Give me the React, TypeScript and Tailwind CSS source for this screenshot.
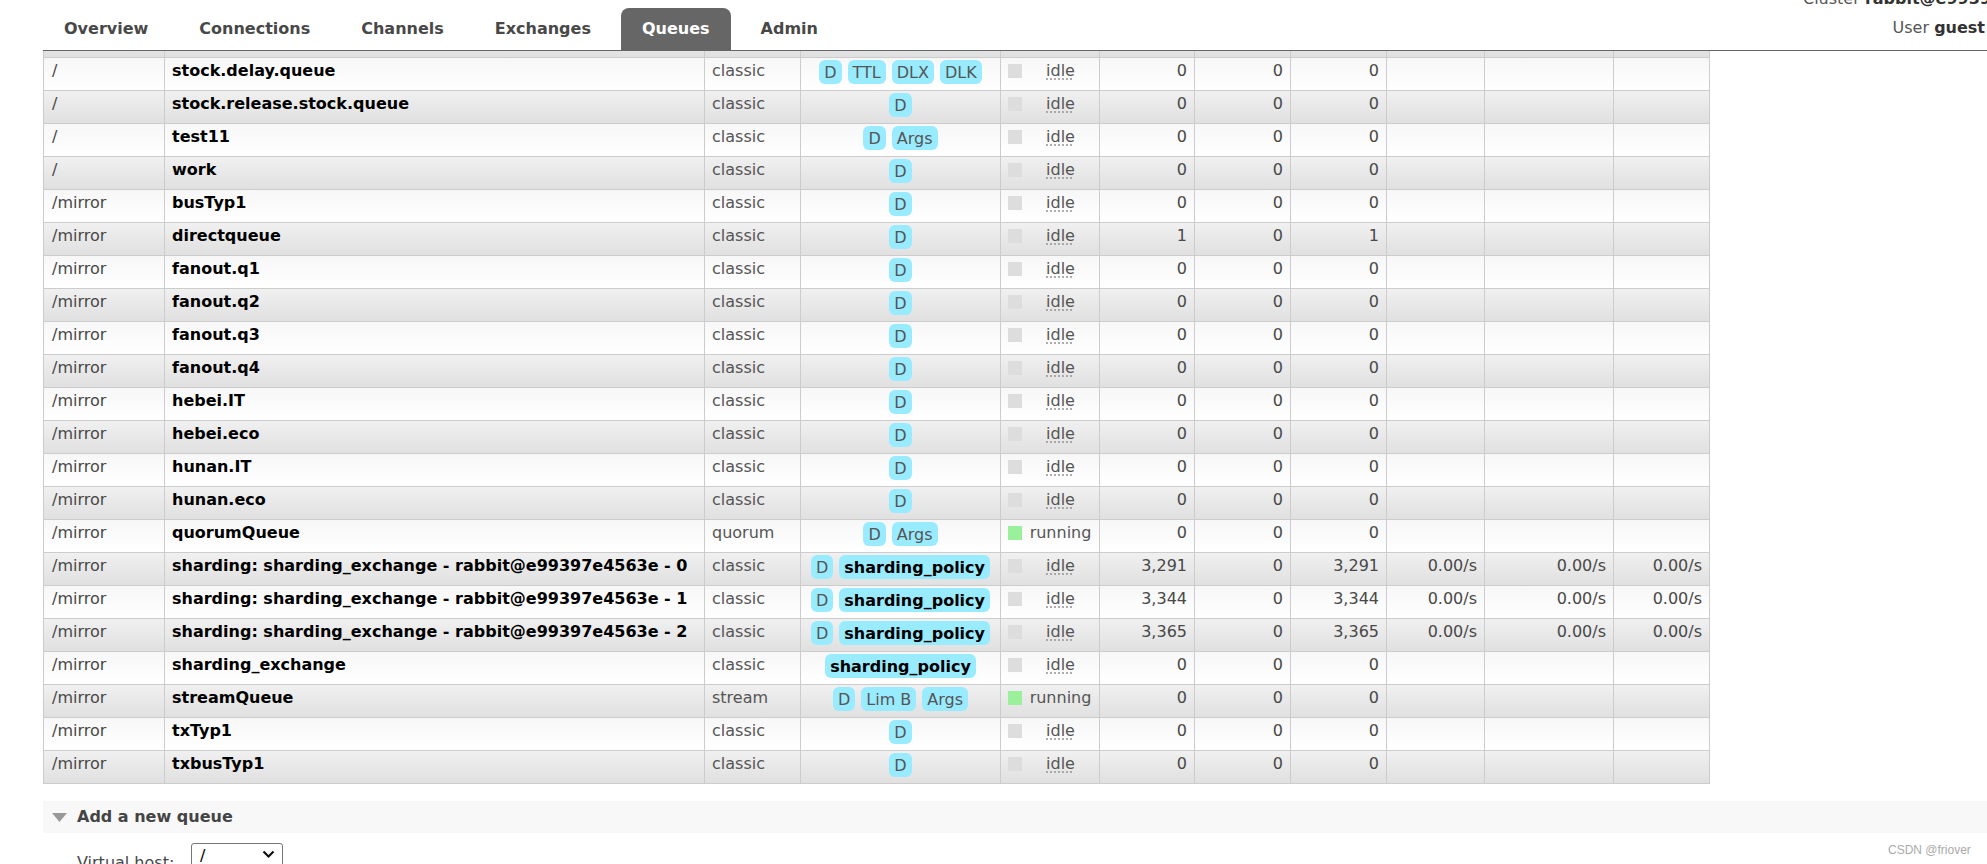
import React from "react";

type Feature = { label: string; strong?: boolean };

type Queue = {
    vhost: string;
    name: string;
    type: string;
    features: Feature[];
    running?: boolean;
    ready: string;
    unacked: string;
    total: string;
    rates?: string[];
};

const D: Feature = { label: "D" };
const ARGS: Feature = { label: "Args" };
const POLICY: Feature = { label: "sharding_policy", strong: true };

const tabs = ["Overview", "Connections", "Channels", "Exchanges", "Queues", "Admin"];

const mirror = (name: string, extra: Partial<Queue> = {}): Queue => ({
    vhost: "/mirror",
    name,
    type: "classic",
    features: [D],
    ready: "0",
    unacked: "0",
    total: "0",
    ...extra,
});

const queues: Queue[] = [
    { vhost: "/", name: "stock.delay.queue", type: "classic", features: [D, { label: "TTL" }, { label: "DLX" }, { label: "DLK" }], ready: "0", unacked: "0", total: "0" },
    { vhost: "/", name: "stock.release.stock.queue", type: "classic", features: [D], ready: "0", unacked: "0", total: "0" },
    { vhost: "/", name: "test11", type: "classic", features: [D, ARGS], ready: "0", unacked: "0", total: "0" },
    { vhost: "/", name: "work", type: "classic", features: [D], ready: "0", unacked: "0", total: "0" },
    mirror("busTyp1"),
    mirror("directqueue", { ready: "1", total: "1" }),
    mirror("fanout.q1"),
    mirror("fanout.q2"),
    mirror("fanout.q3"),
    mirror("fanout.q4"),
    mirror("hebei.IT"),
    mirror("hebei.eco"),
    mirror("hunan.IT"),
    mirror("hunan.eco"),
    mirror("quorumQueue", { type: "quorum", features: [D, ARGS], running: true }),
    mirror("sharding: sharding_exchange - rabbit@e99397e4563e - 0", { features: [D, POLICY], ready: "3,291", total: "3,291", rates: ["0.00/s", "0.00/s", "0.00/s"] }),
    mirror("sharding: sharding_exchange - rabbit@e99397e4563e - 1", { features: [D, POLICY], ready: "3,344", total: "3,344", rates: ["0.00/s", "0.00/s", "0.00/s"] }),
    mirror("sharding: sharding_exchange - rabbit@e99397e4563e - 2", { features: [D, POLICY], ready: "3,365", total: "3,365", rates: ["0.00/s", "0.00/s", "0.00/s"] }),
    mirror("sharding_exchange", { features: [POLICY] }),
    mirror("streamQueue", { type: "stream", features: [D, { label: "Lim B" }, ARGS], running: true }),
    mirror("txTyp1"),
    mirror("txbusTyp1"),
];

const grid =
    "grid grid-cols-[121px_540px_96px_200px_99px_95px_96px_96px_98px_129px_96px] h-[33px] shrink-0 border-b border-[#ccc]";
const cell = "border-r border-[#ccc] overflow-hidden whitespace-nowrap";
const white = "bg-linear-to-b from-[#f7f7f7] to-[#ffffff]";
const gray = "bg-linear-to-b from-[#f0f0f0] to-[#e0e0e0]";

function Badge({ f }: { f: Feature }) {
    return (
        <span
            className={`inline-block h-[24px] px-[5px] pt-[3px] leading-[20px] rounded-[6px] bg-[#99ebff] ${
                f.strong ? "font-bold text-black" : "text-[#555]"
            }`}
        >
            {f.label}
        </span>
    );
}

function Row({ q, alt }: { q: Queue; alt: boolean }) {
    return (
        <div className={`${grid} ${alt ? gray : white}`}>
            <div className={`${cell} pl-[8px] pt-[3px] leading-[20px] text-[#484848]`}>{q.vhost}</div>
            <div className={`${cell} pl-[7px] pt-[3px] leading-[20px] font-bold text-black`}>{q.name}</div>
            <div className={`${cell} pl-[7px] pt-[3px] leading-[20px] text-[#555]`}>{q.type}</div>
            <div className={`${cell} flex justify-center gap-[6px] pt-[2px]`}>
                {q.features.map((f, i) => (
                    <Badge key={i} f={f} />
                ))}
            </div>
            <div className={`${cell} flex`}>
                <span className={`ml-[7px] mt-[6px] w-[14px] h-[14px] shrink-0 ${q.running ? "bg-[#9bf09b]" : "bg-[#dddddd]"}`} />
                <span className="flex-1 text-center pt-[3px] leading-[20px] text-[#555]">
                    {q.running ? (
                        "running"
                    ) : (
                        <span className="underline decoration-dotted decoration-[#999] underline-offset-[3px]">idle</span>
                    )}
                </span>
            </div>
            <div className={`${cell} pr-[7px] pt-[3px] leading-[20px] text-right text-[#484848]`}>{q.ready}</div>
            <div className={`${cell} pr-[7px] pt-[3px] leading-[20px] text-right text-[#484848]`}>{q.unacked}</div>
            <div className={`${cell} pr-[7px] pt-[3px] leading-[20px] text-right text-[#484848]`}>{q.total}</div>
            {[0, 1, 2].map((i) => (
                <div key={i} className={`${cell} pr-[7px] pt-[3px] leading-[20px] text-right text-[#484848]`}>
                    {q.rates ? q.rates[i] : ""}
                </div>
            ))}
        </div>
    );
}

function PartialRow() {
    // bottom edge of the row scrolled under the menu
    return (
        <div className="h-[7px] overflow-hidden flex flex-col justify-end">
            <div className={`${grid} ${gray}`}>
                {Array.from({ length: 11 }).map((_, i) => (
                    <div key={i} className={`${cell} ${i === 3 ? "flex justify-center pt-[2px]" : ""}`}>
                        {i === 3 && <span className="inline-block w-[22px] h-[24px] rounded-[6px] bg-[#99ebff]" />}
                    </div>
                ))}
            </div>
        </div>
    );
}

export default function App() {
    return (
        <div className="relative h-[864px] w-full overflow-hidden bg-white font-['DejaVu_Sans',Verdana,sans-serif] text-[16px] text-[#484848]">
            <header className="flex h-[51px] ml-[43px] border-b border-[#666]">
                <nav className="flex items-end gap-[9px]">
                    {tabs.map((t) => (
                        <div
                            key={t}
                            className={`h-[42px] px-[21px] pt-[11px] leading-[20px] font-bold ${
                                t === "Queues" ? "bg-[#666] text-white rounded-t-[8px]" : "text-[#484848]"
                            }`}
                        >
                            {t}
                        </div>
                    ))}
                </nav>
                <div className="ml-auto w-[184px] shrink-0 -mt-[11px] leading-[20px] text-[#555]">
                    <div className="whitespace-nowrap">
                        Cluster <span className="font-bold text-[#333]">rabbit@e99397e4563e</span>
                    </div>
                    <div className="mt-[9px] pr-[2px] text-right whitespace-nowrap">
                        User <span className="font-bold text-[#333]">guest</span>
                    </div>
                </div>
            </header>

            <div className="ml-[43px] w-[1667px] border-l border-[#ccc]">
                <PartialRow />
                {queues.map((q, i) => (
                    <Row key={q.vhost + q.name} q={q} alt={i % 2 === 1} />
                ))}
            </div>

            <section className="mt-[17px] ml-[43px]">
                <div className="h-[32px] bg-[#f8f8f8] flex items-start pt-[6px] pl-[9px]">
                    <svg width="15" height="9" viewBox="0 0 15 9" className="mt-[6px] shrink-0">
                        <polygon points="0,0 15,0 7.5,9" fill="#999" />
                    </svg>
                    <h2 className="ml-[10px] leading-[20px] font-bold text-[#444]">Add a new queue</h2>
                </div>
                <div className="mt-[10px] pl-[34px] flex items-start">
                    <span className="w-[114px] pt-[10px] leading-[20px] text-[#484848]">Virtual host:</span>
                    <div className="w-[92px] h-[32px] border border-[#767676] rounded-[3px] flex items-start justify-between pl-[8px] pr-[7px] pt-[2px] leading-[20px] text-black">
                        <span>/</span>
                        <svg width="13" height="9" viewBox="0 0 13 9" className="mt-[4px]">
                            <path d="M1.5 1.5 L6.5 6.5 L11.5 1.5" fill="none" stroke="#111" strokeWidth="2.2" />
                        </svg>
                    </div>
                </div>
            </section>

            <div className="absolute left-[1888px] top-[843px] font-['Liberation_Sans',Arial,sans-serif] text-[12px] leading-[14px] text-[#aaa]">
                CSDN @friover
            </div>
        </div>
    );
}
